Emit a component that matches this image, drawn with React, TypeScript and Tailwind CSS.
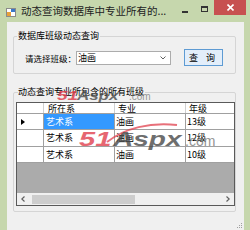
import React from "react";

const rows = [
  { dept: "艺术系", major: "油画", grade: "13级", sel: true },
  { dept: "艺术系", major: "油画", grade: "12级", sel: false },
  { dept: "艺术系", major: "油画", grade: "10级", sel: false },
];

export default function App() {
  return (
    <div className="w-[250px] h-[230px] overflow-hidden relative flex flex-col bg-[#c6d7ad] font-['Noto_Sans_CJK_SC',sans-serif] text-black whitespace-nowrap">
      {/* Title bar */}
      <div className="h-[22px] shrink-0 flex items-start">
        <svg className="ml-[6px] mt-[8px]" width="10" height="9" viewBox="0 0 10 9">
          <rect x="0.5" y="0.5" width="9" height="8" fill="#ffffff" stroke="#8a8a8a" />
          <rect x="5" y="1" width="4" height="3" fill="#3a78c8" />
          <rect x="1" y="4" width="4" height="4" fill="#e8a13a" />
        </svg>
        <div className="ml-[5px] mt-[4px] text-[10.5px] leading-[14px] text-[#222]">动态查询数据库中专业所有的...</div>
        <div className="flex-1" />
        <div className="mt-[11px] w-[6px] h-[2px] bg-[#333]" />
        <div className="ml-[13px] mt-[6px] w-[7px] h-[6px] border border-[#333] border-t-2" />
        <div className="ml-[6px] mr-[4px] w-[32px] h-[15px] bg-[#c75050] flex items-center justify-center">
          <svg width="7" height="7" viewBox="0 0 7 7">
            <path d="M0.5 0.5 L6.5 6.5 M6.5 0.5 L0.5 6.5" stroke="#ffffff" strokeWidth="1.6" />
          </svg>
        </div>
      </div>

      {/* Client area */}
      <div className="ml-[7px] w-[237px] flex-1 bg-[#f0f0f0] relative flex flex-col">
        {/* Group box 1 */}
        <div className="ml-[6px] mt-[14px] w-[223px] h-[38px] border border-[#d5d5d5] rounded-[2px] relative">
          <div className="absolute left-[3px] top-[-7px] px-[1px] bg-[#f0f0f0] text-[9px] leading-[12px]">数据库班级动态查询</div>
          <div className="flex items-center mt-[12px]">
            <div className="ml-[11px] text-[8.5px] leading-[12px] w-[51px] shrink-0">请选择班级：</div>
            <div className="w-[95px] h-[14px] shrink-0 bg-white border border-[#acacac] flex items-center">
              <span className="ml-[1px] text-[9px] leading-[12px]">油画</span>
              <div className="flex-1" />
              <svg className="mr-[4px]" width="6" height="4" viewBox="0 0 6 4">
                <path d="M0.5 0.5 L3 3 L5.5 0.5" stroke="#606060" strokeWidth="1" fill="none" />
              </svg>
            </div>
            <div className="ml-[13px] w-[39px] h-[17px] shrink-0 bg-[#e3eefa] border border-[#5e9bd3] flex items-center justify-center text-[9px] leading-[12px] tracking-[3px]">
              查 询
            </div>
          </div>
        </div>

        {/* Group box 2 */}
        <div className="ml-[6px] mt-[18px] w-[223px] h-[120px] border border-[#d5d5d5] rounded-[2px] relative">
          <div className="absolute left-[4px] top-[-7px] pr-[1px] bg-[#f0f0f0] text-[9px] leading-[12px]">动态查询专业所包含的所有班级</div>
          {/* DataGridView */}
          <div className="ml-[2px] mt-[9px] w-[219px] h-[104px] border border-[#5a5a5a] bg-[#ababab] flex flex-col">
            <div className="h-[11px] bg-white flex border-b border-[#a0a0a0] text-[9px] leading-[11px]">
              <div className="w-[27px] border-r border-[#d0d0d0]" />
              <div className="w-[71px] border-r border-[#d0d0d0] pl-[4px]">所在系</div>
              <div className="w-[71px] border-r border-[#d0d0d0] pl-[3px]">专业</div>
              <div className="flex-1 pl-[3px]">年级</div>
            </div>
            {rows.map((r, i) => (
              <div
                key={i}
                className={
                  "bg-white flex border-b border-[#a0a0a0] text-[9px] leading-[12px] " +
                  (i === 1 ? "h-[17px]" : "h-[16px]")
                }
              >
                <div className="w-[27px] border-r border-[#a0a0a0] flex items-center">
                  {r.sel && (
                    <svg className="ml-[4px]" width="4" height="6" viewBox="0 0 4 6">
                      <path d="M0 0 L4 3 L0 6 Z" fill="#000" />
                    </svg>
                  )}
                </div>
                <div
                  className={
                    "w-[71px] border-r border-[#a0a0a0] pl-[2px] flex items-center " +
                    (r.sel ? "bg-[#3399ff] text-white" : "")
                  }
                >
                  {r.dept}
                </div>
                <div className="w-[71px] border-r border-[#a0a0a0] pl-[1px] flex items-center">{r.major}</div>
                <div className="flex-1 pl-[1px] flex items-center">{r.grade}</div>
              </div>
            ))}
            <div className="flex-1" />
            <div className="h-[12px] bg-[#f0f0f0] flex items-center">
              <svg className="ml-[4px]" width="4" height="6" viewBox="0 0 4 6">
                <path d="M3.5 0.5 L0.8 3 L3.5 5.5" stroke="#606060" strokeWidth="1.2" fill="none" />
              </svg>
              <div className="ml-[7px] w-[103px] h-[9px] bg-[#cdcdcd]" />
              <div className="flex-1" />
              <svg className="mr-[4px]" width="4" height="6" viewBox="0 0 4 6">
                <path d="M0.5 0.5 L3.2 3 L0.5 5.5" stroke="#606060" strokeWidth="1.2" fill="none" />
              </svg>
            </div>
          </div>
        </div>

        {/* Resize grip */}
        <svg className="absolute right-[1px] bottom-[0px]" width="7" height="8" viewBox="0 0 7 8">
          <rect x="5" y="1" width="1" height="1" fill="#a0a0a0" />
          <rect x="3" y="3" width="1" height="1" fill="#a0a0a0" />
          <rect x="5" y="3" width="1" height="1" fill="#a0a0a0" />
          <rect x="1" y="5" width="1" height="1" fill="#a0a0a0" />
          <rect x="3" y="5" width="1" height="1" fill="#a0a0a0" />
          <rect x="5" y="5" width="1" height="1" fill="#a0a0a0" />
        </svg>
      </div>

      {/* Watermark small */}
      <div className="absolute left-[57px] top-[89px] flex items-baseline italic font-bold font-['Liberation_Sans',sans-serif] leading-none pointer-events-none">
        <span className="text-[13px] text-[#e0404e] opacity-85 inline-block scale-x-[1.45] origin-left w-[20px]">51</span>
        <span className="text-[13px] text-[#4a4a4a] opacity-80 inline-block scale-x-[1.3] origin-left w-[52px]">Aspx</span>
        <span className="text-[10px] text-[#808080] opacity-80 font-normal not-italic">.com</span>
      </div>

      {/* Watermark large */}
      <svg className="absolute left-[105px] top-[120px] pointer-events-none" width="75" height="25" viewBox="0 0 75 25">
        <path d="M2 22 C 20 8, 45 2, 72 5" stroke="#e0404e" strokeOpacity="0.75" strokeWidth="2" fill="none" />
      </svg>
      <div className="absolute left-[79px] top-[129px] flex items-baseline italic font-bold font-['Liberation_Sans',sans-serif] leading-none pointer-events-none">
        <span className="text-[20px] text-[#e0404e] opacity-80 inline-block scale-x-[1.45] origin-left w-[34px]">51</span>
        <span className="text-[20px] text-[#4a4a4a] opacity-80 inline-block scale-x-[1.4] origin-left w-[72px]">Aspx</span>
        <span className="text-[14px] text-[#7a7a7a] opacity-80 font-normal not-italic">.com</span>
      </div>
    </div>
  );
}
